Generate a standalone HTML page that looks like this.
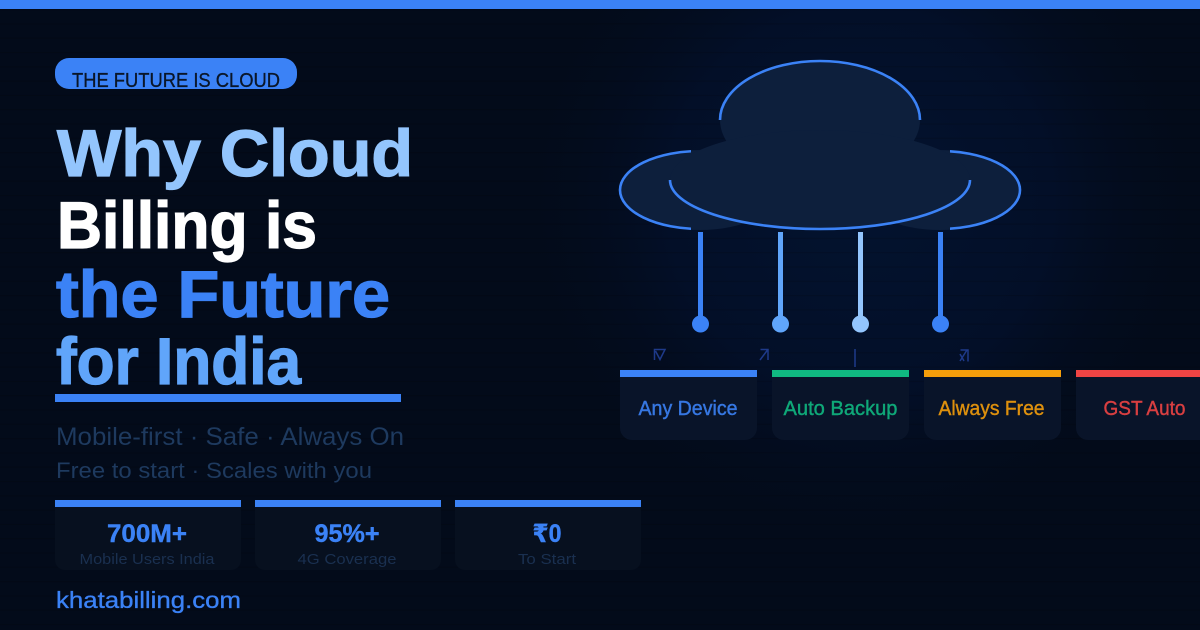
<!DOCTYPE html>
<html><head><meta charset="utf-8">
<style>
html,body{margin:0;padding:0;background:#030b1a;width:1200px;height:630px;overflow:hidden}
svg{display:block}
text{font-family:"Liberation Sans","DejaVu Sans",sans-serif}
</style></head>
<body>
<svg width="1200" height="630" viewBox="0 0 1200 630" xmlns="http://www.w3.org/2000/svg">
<defs>
<radialGradient id="glow" gradientUnits="userSpaceOnUse" cx="860" cy="200" r="350">
<stop offset="0" stop-color="#03132f"/>
<stop offset="0.55" stop-color="#030f28"/>
<stop offset="1" stop-color="#030b1a" stop-opacity="0"/>
</radialGradient>
<pattern id="lines" width="14" height="14.3" patternUnits="userSpaceOnUse" y="9">
<rect y="0" width="14" height="1.2" fill="#000" opacity=".14"/>
</pattern>
<clipPath id="ct"><rect x="700" y="50" width="240" height="70"/></clipPath>
<clipPath id="cl"><rect x="610" y="140" width="81" height="100"/></clipPath>
<clipPath id="cr"><rect x="950" y="140" width="80" height="100"/></clipPath>
<clipPath id="cb"><rect x="660" y="180" width="320" height="60"/></clipPath>
<clipPath id="pill"><rect x="55" y="58" width="242" height="31" rx="14"/></clipPath>
</defs>
<rect width="1200" height="630" fill="#030b1a"/>
<rect width="1200" height="630" fill="url(#glow)"/>
<rect width="1200" height="630" fill="url(#lines)"/>
<rect width="1200" height="9" fill="#3b82f6"/>

<!-- pill -->
<rect x="55" y="58" width="242" height="31" rx="14" fill="#3b82f6"/>
<text x="72" y="87" font-size="20" fill="#0a1628" stroke="#0a1628" stroke-width=".3" textLength="208" lengthAdjust="spacingAndGlyphs" clip-path="url(#pill)">THE FUTURE IS CLOUD</text>

<!-- heading -->
<g font-weight="700" font-size="66" stroke-width="1.300">
<text x="57" y="176" fill="#93c5fd" stroke="#93c5fd" textLength="356" lengthAdjust="spacingAndGlyphs">Why Cloud</text>
<text x="57" y="248" fill="#ffffff" stroke="#ffffff" textLength="260" lengthAdjust="spacingAndGlyphs">Billing is</text>
<text x="56" y="317" fill="#3b82f6" stroke="#3b82f6" textLength="334" lengthAdjust="spacingAndGlyphs">the Future</text>
<text x="56" y="384" fill="#60a5fa" stroke="#60a5fa" textLength="245" lengthAdjust="spacingAndGlyphs">for India</text>
</g>
<rect x="55" y="394" width="346" height="8" fill="#3b82f6"/>

<!-- subtitle -->
<text x="56" y="445" font-size="25" fill="#1e3a5f" textLength="348" lengthAdjust="spacingAndGlyphs">Mobile-first · Safe · Always On</text>
<text x="56" y="478" font-size="22" fill="#1e3a5f" textLength="316" lengthAdjust="spacingAndGlyphs">Free to start · Scales with you</text>

<!-- stats -->
<g>
<path d="M55 500h186v60a10 10 0 0 1-10 10H65a10 10 0 0 1-10-10z" fill="#07101f"/>
<rect x="55" y="500" width="186" height="7" fill="#3b82f6"/>
<path d="M255 500h186v60a10 10 0 0 1-10 10H265a10 10 0 0 1-10-10z" fill="#07101f"/>
<rect x="255" y="500" width="186" height="7" fill="#3b82f6"/>
<path d="M455 500h186v60a10 10 0 0 1-10 10H465a10 10 0 0 1-10-10z" fill="#07101f"/>
<rect x="455" y="500" width="186" height="7" fill="#3b82f6"/>
</g>
<g font-weight="700" font-size="25" fill="#3b82f6" stroke="#3b82f6" stroke-width=".4" text-anchor="middle">
<text x="147" y="542" textLength="80" lengthAdjust="spacingAndGlyphs">700M+</text>
<text x="347" y="542" textLength="65" lengthAdjust="spacingAndGlyphs">95%+</text>
<text x="547" y="542" textLength="29" lengthAdjust="spacingAndGlyphs">₹0</text>
</g>
<g font-size="15" fill="#1a3050" text-anchor="middle">
<text x="147" y="564" textLength="135" lengthAdjust="spacingAndGlyphs">Mobile Users India</text>
<text x="347" y="564" textLength="99" lengthAdjust="spacingAndGlyphs">4G Coverage</text>
<text x="547" y="564" textLength="58" lengthAdjust="spacingAndGlyphs">To Start</text>
</g>
<text x="56" y="608" font-size="23" fill="#3b82f6" stroke="#3b82f6" stroke-width=".35" textLength="185" lengthAdjust="spacingAndGlyphs">khatabilling.com</text>

<!-- cloud fills -->
<g fill="#0d1f3c">
<ellipse cx="820" cy="120" rx="100" ry="60"/>
<ellipse cx="700" cy="190" rx="80" ry="40"/>
<ellipse cx="940" cy="190" rx="80" ry="40"/>
<ellipse cx="820" cy="180" rx="150" ry="50"/>
</g>
<g fill="none" stroke="#3b82f6" stroke-width="2.600">
<ellipse cx="820" cy="120" rx="100" ry="59" clip-path="url(#ct)"/>
<ellipse cx="700" cy="190" rx="80" ry="39" clip-path="url(#cl)"/>
<ellipse cx="940" cy="190" rx="80" ry="39" clip-path="url(#cr)"/>
<ellipse cx="820" cy="180" rx="150" ry="49" clip-path="url(#cb)"/>
</g>

<!-- connectors -->
<rect x="698" y="232" width="5" height="92" fill="#3b82f6"/><circle cx="700.500" cy="324" r="8.500" fill="#3b82f6"/>
<rect x="778" y="232" width="5" height="92" fill="#60a5fa"/><circle cx="780.500" cy="324" r="8.500" fill="#60a5fa"/>
<rect x="858" y="232" width="5" height="92" fill="#93c5fd"/><circle cx="860.500" cy="324" r="8.500" fill="#93c5fd"/>
<rect x="938" y="232" width="5" height="92" fill="#3b82f6"/><circle cx="940.500" cy="324" r="8.500" fill="#3b82f6"/>

<!-- tiny glyphs -->
<g fill="none" stroke="#1e3a8a" stroke-width="1.500">
<path d="M654.500 360V349.500H665L660 359.500L655.500 351"/>
<path d="M760 360L767.500 350M760.500 349.500H768V360"/>
<path d="M855 349V367"/>
<path d="M960 361L967 350M960.500 350H968V361.500M960 354L964 361"/>
</g>

<!-- cards -->
<g fill="#091429">
<path d="M620 370h137v58a12 12 0 0 1-12 12H632a12 12 0 0 1-12-12z"/>
<path d="M772 370h137v58a12 12 0 0 1-12 12H784a12 12 0 0 1-12-12z"/>
<path d="M924 370h137v58a12 12 0 0 1-12 12H936a12 12 0 0 1-12-12z"/>
<path d="M1076 370h137v58a12 12 0 0 1-12 12H1088a12 12 0 0 1-12-12z"/>
</g>
<rect x="620" y="370" width="137" height="7" fill="#3b82f6"/>
<rect x="772" y="370" width="137" height="7" fill="#10b981"/>
<rect x="924" y="370" width="137" height="7" fill="#f59e0b"/>
<rect x="1076" y="370" width="137" height="7" fill="#ef4444"/>
<g font-size="20" opacity=".9" stroke-width=".4">
<text x="638.500" y="415" fill="#3b82f6" stroke="#3b82f6" textLength="99" lengthAdjust="spacingAndGlyphs">Any Device</text>
<text x="783.500" y="415" fill="#10b981" stroke="#10b981" textLength="114" lengthAdjust="spacingAndGlyphs">Auto Backup</text>
<text x="938.500" y="415" fill="#f59e0b" stroke="#f59e0b" textLength="106" lengthAdjust="spacingAndGlyphs">Always Free</text>
<text x="1103.500" y="415" fill="#ef4444" stroke="#ef4444" textLength="82" lengthAdjust="spacingAndGlyphs">GST Auto</text>
</g>
</svg>
</body></html>
